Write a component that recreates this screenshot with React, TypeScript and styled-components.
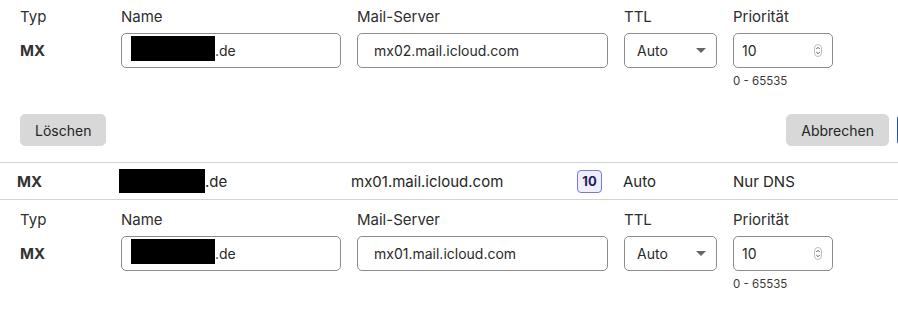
import React from "react";
import styled, { createGlobalStyle } from "styled-components";

const GlobalStyle = createGlobalStyle`
    body {
        margin: 0;
        background: #ffffff;
        font-family: Inter, "Noto Sans", "Liberation Sans", sans-serif;
        color: #242424;
        overflow: hidden;
    }
`;

const Page = styled.div`
    width: 997px;
    background: #ffffff;
`;

const Form = styled.div<{ $top: number }>`
    padding: ${(props) => props.$top}px 0 0 20px;
`;

const FieldGrid = styled.div`
    display: grid;
    grid-template-columns: 85px 220px 251px 93px 100px;
    column-gap: 16px;
    align-items: center;
`;

const Label = styled.div`
    font-size: 15px;
    line-height: 18px;
    color: #2e2e2e;
    margin-bottom: 7px;
`;

const TypeValue = styled.div`
    font-size: 15px;
    font-weight: 700;
    color: #333;
`;

const Box = styled.div<{ $pad: number }>`
    box-sizing: border-box;
    height: 35px;
    border: 1px solid #8c8c8c;
    border-radius: 5px;
    display: flex;
    align-items: center;
    padding: 0 10px 0 ${(props) => props.$pad}px;
    font-size: 14px;
    color: #2a2a2a;
    background: #fff;
`;

const Redacted = styled.span<{ $w: number; $h: number }>`
    display: inline-block;
    width: ${(props) => props.$w}px;
    height: ${(props) => props.$h}px;
    background: #000;
`;

const NameBox = styled(Box)`
    align-items: flex-start;
    padding-top: 2px;
    span + span {
        margin-top: 6px;
    }
`;

const Grow = styled.span`
    flex: 1;
`;

const Hint = styled.div`
    grid-column: 5;
    font-size: 11.5px;
    color: #3a3a3a;
    margin-top: 6px;
`;

const Actions = styled.div`
    display: flex;
    justify-content: space-between;
    padding: 26px 0 16px 20px;
`;

const RightGroup = styled.div`
    display: flex;
    gap: 8px;
`;

const Button = styled.button<{ $primary?: boolean }>`
    height: 32px;
    min-width: ${(props) => (props.$primary ? "100px" : "0")};
    border: 1px solid ${(props) => (props.$primary ? "#1f4fc0" : "#d8d8d8")};
    border-radius: 5px;
    background: ${(props) => (props.$primary ? "#2c5fd6" : "#d8d8d8")};
    color: ${(props) => (props.$primary ? "#fff" : "#242424")};
    font-family: inherit;
    font-size: 14px;
    padding: 0 14px;
`;

const Row = styled.div`
    display: grid;
    grid-template-columns: 102px 232px 226px 46px 110px 1fr;
    align-items: center;
    height: 36px;
    padding-left: 17px;
    border-top: 1px solid #d3d3d3;
    border-bottom: 1px solid #d3d3d3;
    font-size: 15px;
    color: #262626;
`;

const Cell = styled.div`
    display: flex;
    align-items: center;
`;

const Badge = styled.span`
    box-sizing: border-box;
    width: 25px;
    height: 23px;
    display: inline-flex;
    align-items: center;
    justify-content: center;
    border: 1px solid #7a78e0;
    border-radius: 4px;
    background: #eeeefd;
    color: #1f2060;
    font-size: 13px;
    font-weight: 700;
`;

function Caret() {
    return (
        <svg width="10" height="5" viewBox="0 0 10 5">
            <path d="M0 0 H10 L5 5 Z" fill="#666" />
        </svg>
    );
}

function Spinner() {
    return (
        <svg width="8" height="13" viewBox="0 0 8 13">
            <rect x="0.5" y="0.5" width="7" height="12" rx="3.5" fill="none" stroke="#bdbdbd" />
            <path d="M2.3 5 L4 3.3 L5.7 5" fill="none" stroke="#555" strokeWidth="1" />
            <path d="M2.3 8 L4 9.7 L5.7 8" fill="none" stroke="#555" strokeWidth="1" />
        </svg>
    );
}

interface EditProps {
    server: string;
    top: number;
}

function MxForm({ server, top }: EditProps) {
    return (
        <Form $top={top}>
            <FieldGrid>
                <Label>Typ</Label>
                <Label>Name</Label>
                <Label>Mail-Server</Label>
                <Label>TTL</Label>
                <Label>Priorität</Label>

                <TypeValue>MX</TypeValue>
                <NameBox $pad={9}>
                    <Redacted $w={84} $h={25} />
                    <span>.de</span>
                </NameBox>
                <Box $pad={16}>{server}</Box>
                <Box $pad={12}>
                    <Grow>Auto</Grow>
                    <Caret />
                </Box>
                <Box $pad={8}>
                    <Grow>10</Grow>
                    <Spinner />
                </Box>
                <Hint>0 - 65535</Hint>
            </FieldGrid>
        </Form>
    );
}

export default function App() {
    return (
        <Page>
            <GlobalStyle />
            <MxForm server="mx02.mail.icloud.com" top={8} />
            <Actions>
                <Button>Löschen</Button>
                <RightGroup>
                    <Button>Abbrechen</Button>
                    <Button $primary aria-label="Speichern" />
                </RightGroup>
            </Actions>
            <Row>
                <TypeValue>MX</TypeValue>
                <Cell>
                    <Redacted $w={86} $h={24} />
                    <span>.de</span>
                </Cell>
                <Cell>mx01.mail.icloud.com</Cell>
                <Cell>
                    <Badge>10</Badge>
                </Cell>
                <Cell>Auto</Cell>
                <Cell>Nur DNS</Cell>
            </Row>
            <MxForm server="mx01.mail.icloud.com" top={11} />
        </Page>
    );
}
